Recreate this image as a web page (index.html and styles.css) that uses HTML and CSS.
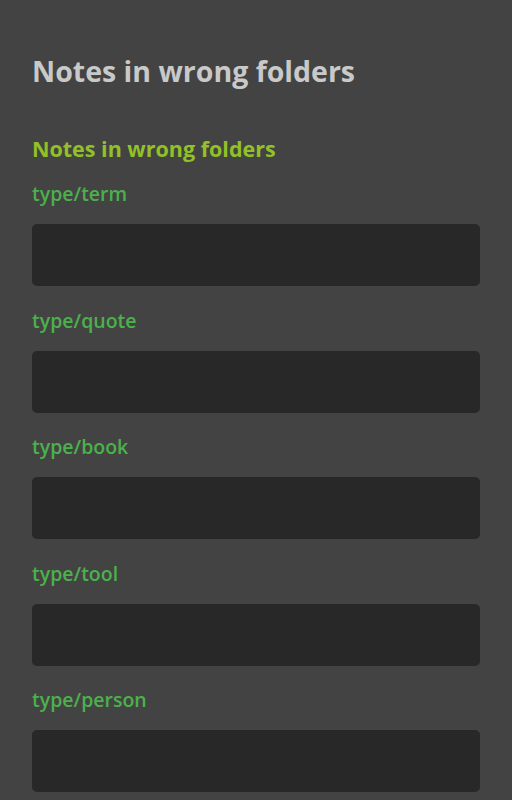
FILE: index.html
```html
<!DOCTYPE html>
<html>
<head>
<meta charset="utf-8">
<link rel="stylesheet" href="styles.css">
</head>
<body>
<main class="page">
  <h1 class="title">Notes in wrong folders</h1>
  <h2 class="section">Notes in wrong folders</h2>
  <div class="list">
    <div class="group">
      <div class="label">type/term</div>
      <div class="box"></div>
    </div>
    <div class="group">
      <div class="label">type/quote</div>
      <div class="box"></div>
    </div>
    <div class="group">
      <div class="label">type/book</div>
      <div class="box"></div>
    </div>
    <div class="group">
      <div class="label">type/tool</div>
      <div class="box"></div>
    </div>
    <div class="group">
      <div class="label">type/person</div>
      <div class="box"></div>
    </div>
  </div>
</main>
</body>
</html>
```
FILE: styles.css
```css
html, body {
  margin: 0;
  padding: 0;
  background: #434343;
}
body {
  font-family: "Open Sans", "Noto Sans", sans-serif;
}
.page {
  padding: 51px 32px 0 32px;
  display: flex;
  flex-direction: column;
}
.title {
  margin: 0;
  font-size: 28.5px;
  line-height: 40px;
  font-weight: 700;
  color: #c9c9c9;
}
.section {
  margin: 43px 0 0 0;
  font-size: 21.5px;
  line-height: 30px;
  font-weight: 700;
  color: #92c126;
}
.list {
  margin-top: 17px;
  display: flex;
  flex-direction: column;
  gap: 21.5px;
}
.group {
  display: flex;
  flex-direction: column;
  gap: 17px;
}
.label {
  font-size: 19.5px;
  line-height: 26px;
  font-weight: 600;
  color: #4cb04c;
}
.box {
  height: 62px;
  background: #282828;
  border-radius: 5px;
}
```
